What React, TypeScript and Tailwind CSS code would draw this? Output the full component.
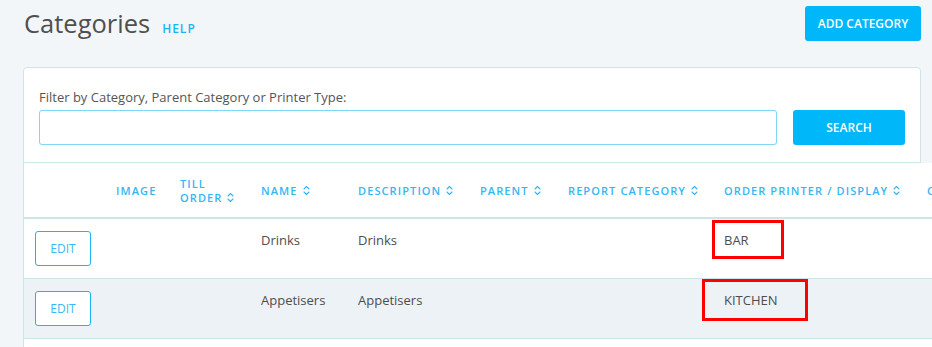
import React from "react";

const font = { fontFamily: '"Open Sans", "Noto Sans", sans-serif' };

function Sort() {
  return (
    <svg width="7" height="11" viewBox="0 0 7 11" className="inline-block ml-[5px] -mt-[2px] align-middle" fill="none" stroke="#35b6f2" strokeWidth="1.1" strokeLinecap="round" strokeLinejoin="round">
      <path d="M1 4 L3.5 1.5 L6 4" />
      <path d="M1 7 L3.5 9.5 L6 7" />
    </svg>
  );
}

const cols = "grid grid-cols-[80px_64px_81px_97px_122px_88px_156px_203px_120px] w-[1011px]";

function Th({ children }: { children?: React.ReactNode }) {
  return (
    <div className="flex items-center pl-[12px] pt-[1px] text-[11px] leading-[14px] font-semibold tracking-[1.1px] text-[#35b6f2] uppercase">
      <span>{children}</span>
    </div>
  );
}

function Row({ name, desc, printer, shaded, box }: { name: string; desc: string; printer: string; shaded?: boolean; box: React.ReactNode }) {
  return (
    <div className={`${cols} h-[60px] border-b border-[#cfe4e7] ${shaded ? "bg-[#edf2f6]" : "bg-white"}`}>
      <div className="pl-[11px] pt-[12px]">
        <button className="w-[56px] h-[35px] border border-[#1bb5f2] rounded-[3px] bg-white text-[12px] text-[#3bb9f2] flex items-center justify-center">
          EDIT
        </button>
      </div>
      <div />
      <div />
      <div className="pl-[12px] pt-[11px] text-[13px] leading-[20px] text-[#4d4d4d]">{name}</div>
      <div className="pl-[12px] pt-[11px] text-[13px] leading-[20px] text-[#4d4d4d]">{desc}</div>
      <div />
      <div />
      <div className="relative pl-[12px] pt-[11px] text-[13px] leading-[20px] text-[#4d4d4d]">
        {printer}
        {box}
      </div>
      <div />
    </div>
  );
}

export default function App() {
  return (
    <div style={font} className="w-full h-[347px] overflow-hidden bg-[#f3f6f9]">
      <div className="pl-[23px] pr-[11px] pt-[6px]">
        <div className="flex items-center justify-between h-[35px]">
          <div className="flex items-baseline pl-[1px]">
            <span className="text-[25.5px] text-[#4f4f4f] leading-[35px]">Categories</span>
            <span className="ml-[12px] text-[12px] font-semibold tracking-[1px] text-[#1ab4f0]">HELP</span>
          </div>
          <button className="w-[116px] h-[35px] rounded-[3px] bg-[#00b7f9] text-white text-[12px] font-semibold">
            ADD CATEGORY
          </button>
        </div>

        <div className="mt-[26px] bg-white border border-[#cfe4e7] rounded-t-[4px]">
          <div className="pl-[15px] pr-[15px] pt-[20px] pb-[17px] border-b border-[#cfe4e7]">
            <div className="text-[13px] leading-[18px] text-[#555]">Filter by Category, Parent Category or Printer Type:</div>
            <div className="mt-[4px] flex gap-[16px]">
              <input className="flex-1 h-[35px] border border-[#80d6f5] rounded-[3px] outline-none" />
              <button className="w-[112px] h-[35px] rounded-[3px] bg-[#00b7f9] text-white text-[12px] font-semibold">
                SEARCH
              </button>
            </div>
          </div>

          <div className="relative">
            <div className={`${cols} h-[56px] border-b-2 border-[#cfe4e7] bg-white`}>
              <Th />
              <Th>IMAGE</Th>
              <Th>
                TILL
                <br />
                ORDER<Sort />
              </Th>
              <Th>NAME<Sort /></Th>
              <Th>DESCRIPTION<Sort /></Th>
              <Th>PARENT<Sort /></Th>
              <Th>REPORT CATEGORY<Sort /></Th>
              <Th>ORDER PRINTER / DISPLAY<Sort /></Th>
              <Th>COLOUR<Sort /></Th>
            </div>
            <Row
              name="Drinks"
              desc="Drinks"
              printer="BAR"
              box={<div className="absolute left-0 top-[1px] w-[72px] h-[39px] border-[3px] border-[#ff0000]" />}
            />
            <Row
              name="Appetisers"
              desc="Appetisers"
              printer="KITCHEN"
              shaded
              box={<div className="absolute left-[-10px] top-0 w-[106px] h-[42px] border-[3px] border-[#ff0000]" />}
            />
            <div className="h-[40px] bg-white w-[1011px]" />
          </div>
        </div>
      </div>
    </div>
  );
}
